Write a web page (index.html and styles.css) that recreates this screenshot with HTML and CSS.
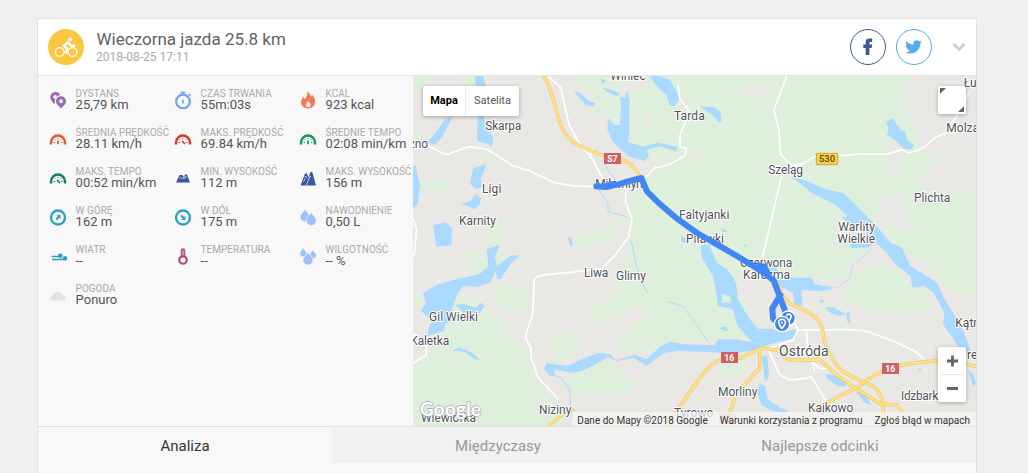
FILE: index.html
```html
<!DOCTYPE html>
<html lang="pl">
<head>
<meta charset="utf-8">
<title>Wieczorna jazda 25.8 km</title>
<link rel="stylesheet" href="styles.css">
</head>
<body>
<main class="card">
  <header class="head">
    <svg class="sport" viewBox="0 0 36 36"><circle cx="18" cy="18" r="18" fill="#fac840"/><g fill="none" stroke="#fff" stroke-width="1.3"><circle cx="11.7" cy="23" r="4.4"/><circle cx="24.500" cy="23" r="4.400"/></g><circle cx="22.200" cy="10.200" r="2" fill="#fff"/><path d="M20 13l-4 3.800 3 2.500-.9 4.200M20.500 13.500l2.300 3.100 3.500.1" fill="none" stroke="#fff" stroke-width="2.400" stroke-linecap="round" stroke-linejoin="round"/></svg>
    <div class="heading"><h1>Wieczorna jazda 25.8 km</h1><time>2018-08-25 17:11</time></div>
    <div class="share">
      <span class="round fb"><svg viewBox="0 0 36 36"><path fill="#3b5998" d="M15.500 26.500v-7.500H13v-3.700h2.500v-2.600C15.500 9.900 17.200 9 19.800 9h2.600v3.600h-1.600c-1 0-1.300.4-1.300 1.200v1.500h2.800l-.4 3.700h-2.400v7.500z"/></svg></span>
      <span class="round tw"><svg viewBox="0 0 36 36"><path fill="#55acee" d="M26.500 11.700l-1.700 1.900C25 19.800 20.500 25 14.300 25c-2.100 0-4-.6-5.300-1.500 2 .2 3.700-.4 5-1.500-1.700-.1-2.900-1.100-3.400-2.400h1.500c-1.900-.5-2.900-1.900-2.900-3.700l1.600.4c-1.600-1.200-1.900-3-1-4.700 2 2.300 4.500 3.600 7.600 3.800-.5-2.600 1.200-4.500 3.500-4.500 1.100 0 2 .4 2.700 1.100l2.300-.9-1.400 2z"/></svg></span>
      <svg class="chev" viewBox="0 0 14 10"><path d="M1.500 2l5.500 5.500L12.500 2" fill="none" stroke="#ccc" stroke-width="2.600"/></svg>
    </div>
  </header>

  <section class="body">
    <ul class="stats">
      <li><svg viewBox="0 0 18 18"><path fill="#9767b0" fill-rule="evenodd" d="M6.500 1a5.200 5.200 0 0 1 4.700 3A6 6 0 0 0 6 11l-.6 2C3 10.500 1.300 8.400 1.300 6.200A5.200 5.200 0 0 1 6.500 1zm0 3a2 2 0 0 0-.5 4l2-3.200z"/><path fill="#9767b0" fill-rule="evenodd" d="M12 5.200a5 5 0 0 1 5 5c0 2.800-2.500 4.500-5 7.300-2.500-2.800-5-4.500-5-7.300a5 5 0 0 1 5-5zm0 3a2 2 0 1 0 .1 0z"/></svg><div><b>DYSTANS</b><span>25,79 km</span></div></li>
      <li><svg viewBox="0 0 18 18" fill="none" stroke="#72a1ee"><circle cx="9" cy="10.500" r="6.800" stroke-width="2.200"/><path d="M6.500 1.500h5M9 1.500v3M9 8.500v4M14.500 3l2 2" stroke-width="1.600"/></svg><div><b>CZAS TRWANIA</b><span>55m:03s</span></div></li>
      <li><svg viewBox="0 0 18 18"><path fill="#f17b55" fill-rule="evenodd" d="M8.300.5c3.200 1.600 2.700 3.600 3.600 5 .7-.3.900-1.200.8-2 2.100 1.700 3.800 4.500 3.300 8-.5 3.500-3.100 6-7 6s-6.800-2.600-7-5.900C1.900 9 3.300 6.800 4.600 5.400c-.1 1.400.2 2.300 1.100 2.500C7.900 6 9.100 3.200 8.300.5zM9 9.500c-.2 2-2.300 2.700-2 4.700.2 1.300 1.200 1.900 2.300 1.900 1.500 0 2.300-1.200 2.200-2.400-.1-1.900-1.800-2.500-2.500-4.200z"/></svg><div><b>KCAL</b><span>923 kcal</span></div></li>

      <li><svg viewBox="0 0 18 18" fill="none" stroke="#e3582f"><path d="M2 14.500v-2a7 7 0 0 1 14 0v2" stroke-width="2.500"/><path d="M4.500 12.500H6M12 12.500h1.500M5.800 9.300l.8.800M12.200 9.300l-.8.800M9 8v1" stroke-width="1"/><path d="M9 10.500v3.700" stroke-width="1.700"/></svg><div><b>ŚREDNIA PRĘDKOŚĆ</b><span>28.11 km/h</span></div></li>
      <li><svg viewBox="0 0 18 18" fill="none" stroke="#cf3a2a"><path d="M2 14.500v-2a7 7 0 0 1 14 0v2" stroke-width="2.500"/><path d="M4.500 12.500H6M12 12.500h1.500M5.800 9.300l.8.800M12.200 9.300l-.8.800M9 8v1" stroke-width="1"/><path d="M8 11l3 3" stroke-width="1.700"/></svg><div><b>MAKS. PRĘDKOŚĆ</b><span>69.84 km/h</span></div></li>
      <li><svg viewBox="0 0 18 18" fill="none" stroke="#169657"><path d="M2 14.500v-2a7 7 0 0 1 14 0v2" stroke-width="2.500"/><path d="M4.500 12.500H6M12 12.500h1.500M5.800 9.300l.8.800M12.200 9.300l-.8.800M9 8v1" stroke-width="1"/><path d="M9 10.500v3.700" stroke-width="1.700"/></svg><div><b>ŚREDNIE TEMPO</b><span>02:08 min/km</span></div></li>

      <li><svg viewBox="0 0 18 18" fill="none" stroke="#1d7e5d"><path d="M2 14.500v-2a7 7 0 0 1 14 0v2" stroke-width="2.500"/><path d="M4.500 12.500H6M12 12.500h1.500M5.800 9.300l.8.800M12.200 9.300l-.8.800M9 8v1" stroke-width="1"/><path d="M8 11l3 3" stroke-width="1.700"/></svg><div><b>MAKS. TEMPO</b><span>00:52 min/km</span></div></li>
      <li><svg viewBox="0 0 18 18"><path fill="#3c55a2" d="M2 13.500L5.500 6h3L10 8.500 11 5.500h2l3 8z"/><path d="M5 9.500l1.500-1.300L8 9.500l1.300-1 .7 1.500 1.500-2.500 1.500 1" fill="none" stroke="#dfe3f1" stroke-width=".8"/></svg><div><b>MIN. WYSOKOŚĆ</b><span>112 m</span></div></li>
      <li><svg viewBox="0 0 18 18"><path fill="#3c55a2" d="M1.500 16.500L6 4.500h2l1.500 4L11.500 3h1.700l3.800 13.500z"/><path d="M5.500 8L7 7.300l1 2M7.500 16L11 7l1.300 1.200M4.500 13L6 9.500" fill="none" stroke="#dfe3f1" stroke-width=".8"/></svg><div><b>MAKS. WYSOKOŚĆ</b><span>156 m</span></div></li>

      <li><svg viewBox="0 0 18 18"><circle cx="9" cy="9.500" r="7" fill="none" stroke="#2a9fc1" stroke-width="2.300"/><path fill="#2a9fc1" d="M7.500 7H11.500V11l-1.200-1.200L8 12.300 6.500 10.800 8.700 8.300z"/></svg><div><b>W GÓRĘ</b><span>162 m</span></div></li>
      <li><svg viewBox="0 0 18 18"><circle cx="9" cy="9.500" r="7" fill="none" stroke="#2a9fc1" stroke-width="2.300"/><path fill="#2a9fc1" d="M11.500 7.800v4.200H7.300l1.400-1.400-2.400-2.400L7.800 6.700l2.400 2.400z"/></svg><div><b>W DÓŁ</b><span>175 m</span></div></li>
      <li><svg viewBox="0 0 18 18" fill="#9fc0fa" stroke="#f7f7f7" stroke-width=".6"><path d="M6 1.500c2 3 4.500 5 4.500 7.500a4.700 4.700 0 0 1-9.400 0c0-2.500 3-4.500 4.900-7.500z"/><path d="M12.300 4.500c2 3.200 5 5.200 5 8a5 5 0 0 1-10 0c0-2.800 3-4.800 5-8z"/></svg><div><b>NAWODNIENIE</b><span>0,50 L</span></div></li>

      <li><svg viewBox="0 0 18 18"><path d="M2.500 9.500h8M3 12.500h12" stroke="#2a9fc1" stroke-width="1.300"/><circle cx="11.300" cy="8.800" r="2.300" fill="#2a9fc1"/><circle cx="16" cy="11.300" r="2.300" fill="#2a9fc1"/></svg><div><b>WIATR</b><span>--</span></div></li>
      <li><svg viewBox="0 0 18 18" fill="none"><path d="M9 3.500v8" stroke="#b2537c" stroke-width="4.500" stroke-linecap="round"/><path d="M9 3.500v8" stroke="#d8a5bc" stroke-width="1.500"/><circle cx="9" cy="13" r="3.700" fill="#fff" stroke="#b2537c" stroke-width="2.300"/></svg><div><b>TEMPERATURA</b><span>--</span></div></li>
      <li><svg viewBox="0 0 18 18" fill="#9fc0fa" stroke="#f7f7f7" stroke-width=".6"><path d="M4.300 1c1.200 2 3.200 3.700 3.200 5.500a3.300 3.300 0 0 1-6.600 0C.9 4.700 3 3 4.300 1z"/><path d="M14 3c1.200 2 3.200 3 3.200 5.200a3.200 3.200 0 0 1-6.400 0C10.800 6 12.800 5 14 3z"/><path d="M9 5.500c2 3 5 4.700 5 7.500a5 5 0 0 1-10 0c0-2.800 3-4.500 5-7.500z"/></svg><div><b>WILGOTNOŚĆ</b><span>-- %</span></div></li>

      <li><svg viewBox="0 0 18 18"><path fill="#e3e3e3" d="M3 14.500c-2.500-.6-2.500-4.300.5-4.500C4.500 6.500 8 4 11 7c1.500 0 2.500.8 3 2.500 3.700 0 3.700 4.500.5 5z"/></svg><div><b>POGODA</b><span>Ponuro</span></div></li>
    </ul>

    <div class="map">
      <svg class="tiles" viewBox="0 3 1689 1050">
        <!-- land and forest -->
        <path fill="#eae8e4" d="M0 0h1689v1060H0z"/>
        <g transform="matrix(1.077 0 0 1 0 3)">
          <g class="forest">
            <path d="M430 0L500 60 490 110 545 120 560 190 600 240 680 250 695 268 650 300 610 320 600 370 610 480 595 550 570 600 560 650 515 690 480 735 500 745 560 730 620 690 640 680 645 710 620 750 590 790 560 800 580 830 640 830 700 800 860 785 930 790 935 700 905 650 910 600 960 570 1020 600 1100 605 1150 620 1200 600 1240 545 1270 520 1210 510 1200 480 1270 450 1300 400 1310 360 1350 355 1375 410 1385 455 1310 460 1340 500 1390 540 1440 570 1490 640 1568 665V345H1460L1400 320 1440 280 1470 250 1410 230 1395 130 1375 60 1385 0z"/>
            <path d="M1190 660l40-70 70-25 50 10 30 50 60 30 5 40-70 20-110-15-40-20zM0 0h50L10 45H0zM125 0h60l15 30-20 25-40-15zM15 320l60-10 25 15-15 25-30-5-35-10zM200 230l40 15-15 15-25-15zM205 435l55-5-5 60-50 40 0-50zM450 490l50-30 50-5 15-35 25 5-25 55-70 35-40-5zM150 530l45-15 60 15 10 35-40 30-75 0zM240 625l55 0 35 40-15 40-60 0-30-35zM120 660l60 10 60 60 45 15-30 30 50 30 30 70 20 60 60 60 5 65H0V855l40-30 0-40 70-60zM0 655l20-10 5 35-25 20zM390 780l40-15 35 20-15 60-55 15zM440 880l60-30 60 10 15 30 45 25-15 35-60 10-90-5-25-20zM850 850l70-20 15 40-35 30-40-10zM1160 770l20-30 30 15-10 20zM0 180l20-10 10 35-30 10zM1130 690l40-10 10 15-35 20z"/>
          </g>
          <g fill="#eae8e4"><path d="M910 40l70-15 15 25-25 12-50-8zM1335 195l35 5-5 60-10 55-25 0-5-80zM790 230l20 5-5 20-20 0zM640 130l25-10-5 35-15 0zM560 70l20-30 20-40h70l-20 30-40 20zM740 70l20-10 5 20-15 30z"/></g>
          <!-- the three long lakes -->
          <g class="water">
            <path d="M1053 302L1090 312 1150 340 1200 352 1240 395 1290 448 1330 500 1362 515 1385 570 1430 600 1460 620 1480 670 1510 720 1535 770 1555 830 1530 830 1500 780 1476 745 1480 710 1450 650 1425 630 1392 635 1385 600 1340 560 1320 530 1270 480 1210 420 1175 385 1110 350z"/>
            <path fill-rule="evenodd" d="M800 510L825 503 845 560 875 580 900 620 905 670 935 725 960 758 1000 758 1040 768 1068 758 1066 785 1010 800 975 812 940 825 880 832 820 828 740 825 700 830 650 870 615 845 565 855 545 842 500 870 470 885 440 890 395 880 395 900 380 900 365 880 372 862 430 870 480 845 520 830 550 835 565 852 620 836 650 850 690 810 715 798 760 805 840 808 850 790 900 790 945 798 905 750 890 700 850 690 840 620 835 600 805 545zM862 653L860 680 886 680 884 662z"/>
            <path d="M205 520L240 507 228 545 235 570 270 540 300 537 270 565 245 610 235 608 230 585 215 620 180 632 140 630 125 650 110 695 108 735 90 745 85 765 40 780 45 750 55 735 22 705 35 680 28 650 70 625 110 612 185 595 210 570zM118 688L140 683 175 695 190 680 200 690 185 712 140 708z"/>
          </g>
        </g>
        <!-- small lakes and streams -->
        <g class="water">
          <path d="M185 3h25l8 30-12 12-18-15zM195 120h18l2 35 25 30-3 30-15-10-28-5-2-20z"/>
          <path d="M45 200l25-30 25-35 25-12-15 28-18 35-22 25zM0 275l8-5 5 30 8 30-8 60-13 10zM180 280l40-13-5 15-12 30 3 25-15 5-20-15zM145 388l30-12 12-20 18 12-5 20-15 15-15-8zM60 450l40-8 17 20-2 48-45 5zM120 825l20-8 40 18 20 20-15-3-30-20z"/>
          <path d="M710 3l25 0 35 10 20 35 10 25-15 20-15-3-10-30-25-22zM483 50l20 5 20 20 25 10-10 10-20-5zM565 10l12 5-2 10-10-2zM570 38l35 10 15 10-10 5-30-15z"/>
          <path d="M622 65L638 68 642 45 650 75 648 120 650 165 645 200 690 215 735 203 795 215 790 230 740 213 700 225 708 240 695 258 650 245 625 225 600 200 583 165 586 130 605 150 620 150 624 110z"/>
          <path d="M860 90l12 5 30 0 20 15 3 30-8 2-22-25-15-7zM1420 140l20-10 12 20 10 15 15 5 5 25 20 13-5 15-25-2-30-30-20-10 5-20zM1285 430l20-8 30 20 20 20-20-2-20-15zM1310 505h70l-10 12-55 3z"/>
          <path d="M465 485l10 5 5 20-8 5zM805 480l15 15 5 10-20-5zM925 458l20 12-15 2zM990 505l8 5 5 7-8-2zM1665 885l15 10 9 30-9 10z"/>
          <path d="M1055 565L1065 545 1085 578 1110 600 1145 608 1195 608 1205 628 1270 638 1230 648 1165 645 1168 692 1145 692 1140 655 1095 630zM1235 697l25 0 40 20-20 6-25-8zM1300 715l8-8 2 15 0 25-8-10zM1218 677l10-3 5 8-10 2zM920 760l15-6 12 12-15 2zM1045 845l18-5 5 65-12 15-5-40zM1040 925l15 8 10 40 35 25 25 8-5 8-40-5-35-20-12-35zM1237 897l25 3 38 20-2 15-25-3-32-20zM1330 950l25 5 20 35-22-8zM1515 882l10-4-4 10z"/>
          <path class="stream" d="M575 270l32 45M555 340l30 45 0 25 55 15M655 500l15 70 15 50 20 35M765 680l45 15 45 60 30 45M418 900l22 5 30 35 5 90"/>
          <path class="stream thin" d="M1270 640l40-30 10-40 60-50"/>
        </g>
        <!-- minor roads -->
        <g class="road">
          <path d="M405 3l38 35 25 110 35 65 30 30 40 75M540 220l-10 30M0 195l50 20 50 24 65-24 55 7 80 50 55 18 70 33 60 10 60 1M700 305l27-28 15 0 40-15 35-22 2-20-17-5-2-30 25-65 0-18-25-30-5-40M640 340l-3 40 20 50-10 55-40 55-40 40-50 7-55 6-80 8-18 10-5 110-18 50-2 20 15 30 0 25 22 62 60 65M0 430l10 30-5 70-5 15M0 775l40 30 0 35-40 25M1121 3l-38 100 15 65 5 70 30 32 30 0 50-30 40-5 30 7 60-5 80 0 45-13 20 10 30-10 20-12 30-25 30-12 20-35 30-40 20-50M1105 305l-45 195-12 45M1150 765l80 0 60-2 70 5 80 30 65 30 30 25M1065 820l35 80 30 15 50-5 15-5 75 125M1180 770l5 60 15 35 5 25M1070 820l70-25 15-30-20-35M1140 860l50-5 30 25 25 0"/>
        </g>
        <!-- highways -->
        <g fill="none" stroke-linecap="round">
          <g stroke="#f0c75e" stroke-width="10"><path d="M392 3c50 80 30 180 110 210l70 30c70 10 85 20 115 70M1102 635c0 50 55 60 80 75 65 30 40 80 60 110 30 70 60 80 120 105 50 20 50 60 50 135M840 940c40-60 50-70 90-90h50l65-30 50 5c20 25 25 32 60 30h65M1689 873c-30-2-70-15-124-15-70 5-160 15-225 75l-60 30-65 35-40 50M1040 825v55l-70 75-20 60-5 45M1215 850l50 45 70 50 65 40 50 5 25 30M855 915l-65 95-30 40M480 1005l-20 5-60 48"/></g>
          <path stroke="#ffe38b" stroke-width="6" d="M392 3c50 80 30 180 110 210l70 30c70 10 85 20 115 70M1102 635c0 50 55 60 80 75 65 30 40 80 60 110 30 70 60 80 120 105 50 20 50 60 50 135M840 940c40-60 50-70 90-90h50l65-30 50 5c20 25 25 32 60 30h65M1689 873c-30-2-70-15-124-15-70 5-160 15-225 75l-60 30-65 35-40 50M1040 825v55l-70 75-20 60-5 45M1215 850l50 45 70 50 65 40 50 5 25 30M855 915l-65 95-30 40M480 1005l-20 5-60 48"/>
        </g>
        <!-- road shields -->
        <g class="shield">
          <path fill="#cf5f62" d="M573 234h51v33h-51zM924 831h51v33h-51zM1407 864h51v33h-51z"/><path fill="#e8b5ae" d="M918 1014h48v33h-48z"/>
          <path fill="#fbd342" stroke="#cda432" stroke-width="3" d="M1210 235h64v34h-64z"/>
          <text x="598" y="261">S7</text><text x="949" y="857">16</text><text x="1432" y="890">16</text><text x="1242" y="261" class="dark">530</text>
        </g>
        <!-- place names -->
        <g class="places">
          <text x="592" y="14" textLength="106">Winiec</text><text x="217" y="164" textLength="108">Skarpa</text><text x="-12" y="220" textLength="57">zno</text>
          <text x="207" y="355" textLength="58">Ligi</text><text x="138" y="450" textLength="111">Karnity</text><text x="547" y="339" textLength="142">Miłomłyn</text>
          <text x="783" y="136" textLength="92">Tarda</text><text x="1066" y="298" textLength="104">Szeląg</text><text x="1652" y="36">Łu</text><text x="1600" y="171">Molza</text>
          <text x="1503" y="381" textLength="109">Plichta</text><text x="798" y="432" textLength="151">Faltyjanki</text><text x="819" y="503" textLength="114">Piławki</text>
          <text x="1276" y="468" textLength="110">Warlity</text><text x="1273" y="504" textLength="113">Wielkie</text><text x="513" y="607" textLength="73">Liwa</text><text x="609" y="616" textLength="90">Glimy</text>
          <text x="981" y="577" textLength="157">Czerwona</text><text x="990" y="612" textLength="141">Karczma</text><text x="48" y="738" textLength="147">Gil Wielki</text><text x="-8" y="810" textLength="117">Kaletka</text>
          <text x="378" y="1018" textLength="97">Niziny</text><text x="24" y="1040" textLength="165">Wiewiórka</text><text x="783" y="1027" textLength="118">Tyrowo</text><text x="915" y="964" textLength="118">Morliny</text>
          <text x="1185" y="1012" textLength="136">Kajkowo</text><text x="1464" y="976" textLength="112">Idzbark</text><text x="1627" y="756">Kątno</text><text x="1662" y="852">re</text>
          <text class="city" x="1098" y="843" textLength="149">Ostróda</text>
        </g>
        <!-- recorded track -->
        <path class="track" d="M550 334l28 2 35-7 40-12 32-8 17 40 35 35 50 43 65 47 65 37 65 38 60 37 40 30 17 45 23 63M1102 660l-24 40 2 30 20 18"/>
        <path fill="#4285f4" d="M1030 562l30 5 15 30-35-5zM555 333l30 10 40-10-30-15z"/>
        <g fill="#4280ed" stroke="#fff" stroke-width="4"><circle cx="1125" cy="730" r="22"/><circle cx="1107" cy="747" r="23"/></g>
        <g fill="none" stroke="#fff" stroke-width="5"><path d="M1121 724c0-9 13-9 13 1 0 7-7 12-7 17"/><path d="M1107 760c-18-20-8-27 0-27s18 7 0 27z"/></g><circle cx="1107" cy="743" r="3" fill="#fff"/>
        <text class="logo" x="20" y="1023" textLength="184">Google</text>
      </svg>
      <div class="types"><span class="on">Mapa</span><span>Satelita</span></div>
      <div class="full"><svg viewBox="0 0 28 28"><path fill="#666" d="M2 2h6L2 8zM26 26h-6l6-6z"/></svg></div>
      <div class="zoom"><svg viewBox="0 0 28 55"><path d="M4 27.500h20" stroke="#e3e3e3"/><path d="M9 14h11M14.500 8.500v11M9 41.500h11" stroke="#666" stroke-width="2.800"/></svg></div>
      <div class="legal"><span>Dane do Mapy ©2018 Google</span><span>Warunki korzystania z programu</span><span>Zgłoś błąd w mapach</span></div>
    </div>
  </section>

  <nav class="tabs"><span class="tab first">Analiza</span><span class="tab mid">Międzyczasy</span><span class="tab last">Najlepsze odcinki</span></nav>
</main>
</body>
</html>
```
FILE: styles.css
```css
* { box-sizing: border-box; }
body { margin: 0; padding: 18px 0 0 37px; height: 473px; overflow: hidden; background: #f0f0f0; font-family: Roboto, "Liberation Sans", sans-serif; color: #555; }
.card { width: 940px; height: 470px; background: #f8f8f8; border: 1px solid #e1e1e1; }
.head { height: 57px; padding: 0 10px; display: flex; align-items: center; background: #fff; border-bottom: 1px solid #e3e3e3; }
.sport { width: 36px; height: 36px; }
.heading { margin-left: 12.500px; flex: 1; }
h1 { margin: 0; font-size: 17px; line-height: 18px; font-weight: 400; color: #626262; }
time { display: block; margin: 2px 0 1px -.5px; font-size: 12px; line-height: 14px; color: #aaa; }
.share { display: flex; align-items: center; gap: 10px; }
.round { width: 36px; height: 36px; border: 1px solid; border-radius: 50%; display: flex; }
.round svg { width: 34px; height: 34px; }
.fb { color: #3b5998; }
.tw { color: #55acee; }
.chev { width: 14px; height: 10px; margin-left: 10px; }
.body { display: flex; height: 350px; }
.stats { width: 375px; flex: none; margin: 0; padding: 12px 0 0 11px; list-style: none; display: grid; grid-template-columns: repeat(3, 125px); grid-auto-rows: 39px; align-content: start; white-space: nowrap; }
.stats li { display: flex; gap: 8.6px; min-width: 0; }
.stats svg { width: 18px; height: 18px; margin-top: 3px; flex: none; }
.stats b { display: block; font-weight: 400; font-size: 10px; line-height: 11px; color: #aaa; }
.stats span { display: block; font-size: 13px; line-height: 12px; }
.map { position: relative; width: 563px; height: 350px; overflow: hidden; }
.tiles { display: block; width: 563px; height: 350px; }
.forest { fill: #deefdc; }
.water { fill: #aadaff; }
.stream { fill: none; stroke: #aadaff; stroke-width: 3; }
.thin { stroke-width: 2; }
.road { fill: none; stroke: #fff; stroke-width: 5; stroke-linejoin: round; }
.shield text { font-size: 26px; font-weight: 700; fill: #fff; text-anchor: middle; }
.shield .dark { font-size: 28px; font-weight: 500; fill: #54481b; }
.places { font-size: 36px; fill: #4f5257; stroke: #fff; stroke-width: 6; stroke-linejoin: round; paint-order: stroke; }
.places .city { font-size: 42px; }
.track { fill: none; stroke: #4285f4; stroke-width: 18; stroke-linecap: round; stroke-linejoin: round; }
.logo { font-family: Lato, sans-serif; font-size: 58px; font-weight: 700; fill: #fff; stroke: #a5aaa5; stroke-width: 4; paint-order: stroke; }
.types, .full, .zoom { position: absolute; background: #fff; border-radius: 2px; box-shadow: 0 1px 4px rgba(0, 0, 0, .3); }
.types { left: 10px; top: 10px; width: 96px; height: 30px; display: flex; align-items: center; font-size: 11px; line-height: 30px; }
.types span { width: 53px; text-align: center; }
.types .on { width: 43px; font-weight: 700; color: #000; border-right: 1px solid #e9e9e9; }
.full { right: 10px; top: 10px; width: 28px; height: 28px; }
.zoom { right: 10px; bottom: 24px; width: 28px; height: 55px; }
.full svg, .zoom svg { display: block; width: 100%; height: 100%; }
.legal { position: absolute; right: 0; bottom: 0; height: 14px; padding: 0 6px 0 5px; display: flex; gap: 12px; white-space: nowrap; background: rgba(245, 245, 245, .75); font-size: 10px; line-height: 17px; color: #333; }
.tabs { display: flex; height: 37px; border-top: 1px solid #e1e1e1; font-size: 15px; line-height: 38px; text-align: center; }
.tab { background: #f1f1f1; color: #999; }
.first { width: 294px; background: #f8f8f8; color: #333; }
.mid { width: 332px; }
.last { width: 312px; }
```
